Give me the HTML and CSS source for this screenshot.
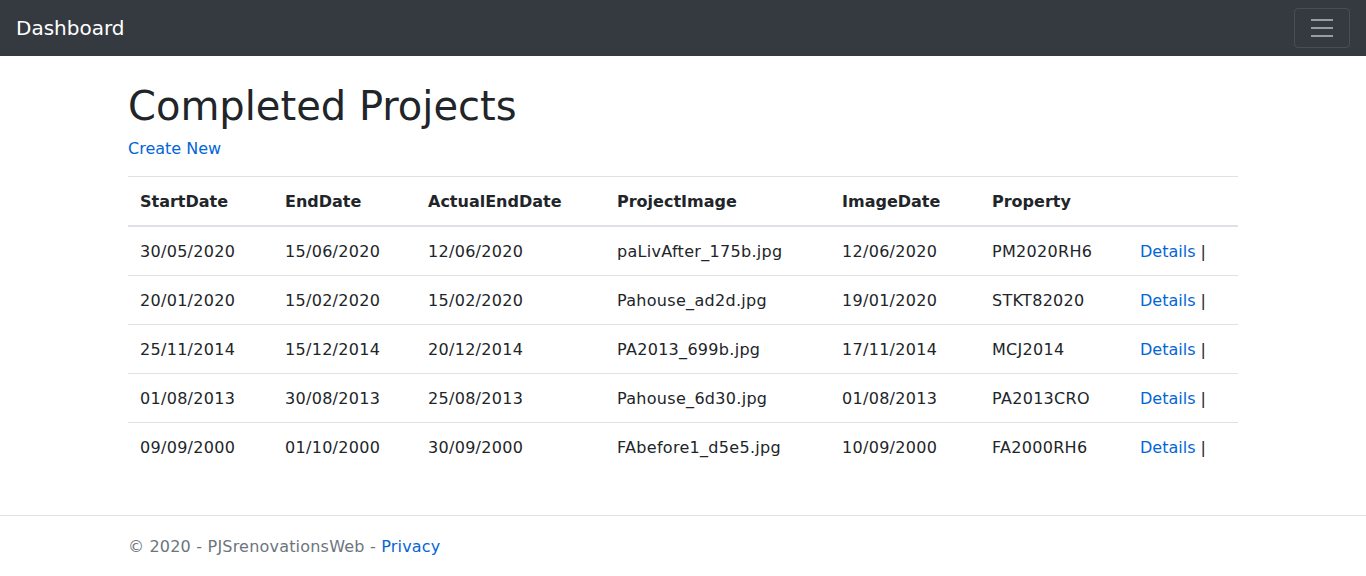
FILE: index.html
```html
<!DOCTYPE html>
<html lang="en">
<head>
<meta charset="utf-8">
<title>Completed Projects</title>
<link rel="stylesheet" href="styles.css">
</head>
<body>
<header>
  <nav class="navbar">
    <a class="brand" href="#">Dashboard</a>
    <button class="toggler" type="button" aria-label="Toggle navigation">
      <svg width="30" height="30" viewBox="0 0 30 30"><path stroke="rgba(255,255,255,0.5)" stroke-width="2" stroke-miterlimit="10" d="M4 7h22M4 15h22M4 23h22"/></svg>
    </button>
  </nav>
</header>
<div class="container">
  <main class="main">
    <h1 class="title">Completed Projects</h1>
    <p class="create"><a href="#">Create New</a></p>
    <table class="table">
      <thead>
        <tr>
          <th class="col-start">StartDate</th>
          <th class="col-end">EndDate</th>
          <th class="col-actual">ActualEndDate</th>
          <th class="col-image">ProjectImage</th>
          <th class="col-imgdate">ImageDate</th>
          <th class="col-prop">Property</th>
          <th class="col-actions"></th>
        </tr>
      </thead>
      <tbody>
        <tr>
          <td>30/05/2020</td><td>15/06/2020</td><td>12/06/2020</td><td>paLivAfter_175b.jpg</td><td>12/06/2020</td><td>PM2020RH6</td><td class="actions"><a href="#">Details</a> |</td>
        </tr>
        <tr>
          <td>20/01/2020</td><td>15/02/2020</td><td>15/02/2020</td><td>Pahouse_ad2d.jpg</td><td>19/01/2020</td><td>STKT82020</td><td class="actions"><a href="#">Details</a> |</td>
        </tr>
        <tr>
          <td>25/11/2014</td><td>15/12/2014</td><td>20/12/2014</td><td>PA2013_699b.jpg</td><td>17/11/2014</td><td>MCJ2014</td><td class="actions"><a href="#">Details</a> |</td>
        </tr>
        <tr>
          <td>01/08/2013</td><td>30/08/2013</td><td>25/08/2013</td><td>Pahouse_6d30.jpg</td><td>01/08/2013</td><td>PA2013CRO</td><td class="actions"><a href="#">Details</a> |</td>
        </tr>
        <tr>
          <td>09/09/2000</td><td>01/10/2000</td><td>30/09/2000</td><td>FAbefore1_d5e5.jpg</td><td>10/09/2000</td><td>FA2000RH6</td><td class="actions"><a href="#">Details</a> |</td>
        </tr>
      </tbody>
    </table>
  </main>
</div>
<footer class="footer">
  <div class="container">
    &copy; 2020 - PJSrenovationsWeb - <a href="#">Privacy</a>
  </div>
</footer>
</body>
</html>
```
FILE: styles.css
```css
* { box-sizing: border-box; }
html, body { margin: 0; padding: 0; }
body {
  font-family: "DejaVu Sans", "Liberation Sans", sans-serif;
  font-size: 16px;
  line-height: 1.5;
  color: #212529;
  background: #fff;
  min-height: 100vh;
  display: flex;
  flex-direction: column;
}
a { color: #0366d6; text-decoration: none; }

.navbar {
  background: #343a40;
  height: 56px;
  padding: 8px 16px;
  display: flex;
  align-items: center;
  justify-content: space-between;
}
.brand {
  color: #fff;
  font-size: 20px;
  line-height: 30px;
  padding: 5px 0;
}
.toggler {
  width: 56px;
  height: 40px;
  padding: 4px 12px;
  background: transparent;
  border: 1px solid rgba(255,255,255,0.1);
  border-radius: 4px;
  display: flex;
  align-items: center;
  justify-content: center;
}
.toggler svg { display: block; }

.container {
  width: 1140px;
  padding: 0 15px;
  margin: 0 auto;
}
.main { padding-top: 26px; padding-bottom: 16px; }
.title {
  margin: 0 0 7px;
  font-size: 40px;
  font-weight: 500;
  line-height: 1.2;
}
.create { margin: 0 0 15px; }

.table {
  width: 100%;
  table-layout: fixed;
  border-collapse: collapse;
  margin-bottom: 16px;
  color: #212529;
}
.table th, .table td {
  padding: 13px 12px 11px;
  text-align: left;
  vertical-align: top;
  border-top: 1px solid #dee2e6;
  white-space: nowrap;
}
.table td { letter-spacing: 0.3px; }
.table td.actions { letter-spacing: 0; }
.table thead th {
  vertical-align: bottom;
  border-bottom: 2px solid #dee2e6;
  font-weight: bold;
}
.col-start { width: 145px; }
.col-end { width: 143px; }
.col-actual { width: 189px; }
.col-image { width: 225px; }
.col-imgdate { width: 150px; }
.col-prop { width: 148px; }
.col-actions { width: 110px; }

.footer {
  margin-top: auto;
  border-top: 1px solid #dee2e6;
  padding-top: 2px;
  line-height: 58px;
  color: #6c757d;
  white-space: nowrap;
  letter-spacing: 0.2px;
}
```
